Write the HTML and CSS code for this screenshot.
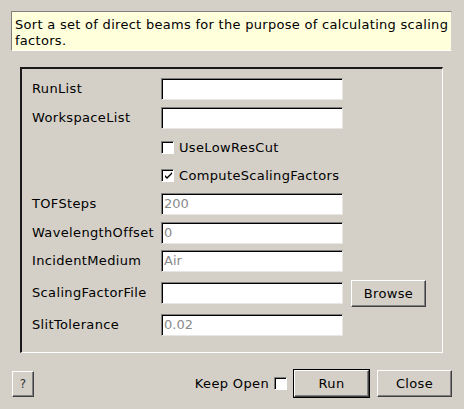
FILE: index.html
```html
<!DOCTYPE html>
<html>
<head>
<meta charset="utf-8">
<link rel="stylesheet" href="styles.css">
</head>
<body>
<div class="dialog">
  <div class="desc">Sort a set of direct beams for the purpose of calculating scaling factors.</div>
  <div class="frame">
    <div class="grid">
      <div class="label">RunList</div>
      <div class="input"></div>
      <div></div>

      <div class="label">WorkspaceList</div>
      <div class="input"></div>
      <div></div>

      <div></div>
      <div class="check"><span class="box"></span><span>UseLowResCut</span></div>
      <div></div>

      <div></div>
      <div class="check"><span class="box"><svg width="9" height="9" viewBox="0 0 9 9"><path d="M1 4 L3 6 L8 1 L8 3 L3 8 L1 6 Z" fill="#000"/></svg></span><span>ComputeScalingFactors</span></div>
      <div></div>

      <div class="label">TOFSteps</div>
      <div class="input muted">200</div>
      <div></div>

      <div class="label">WavelengthOffset</div>
      <div class="input muted">0</div>
      <div></div>

      <div class="label">IncidentMedium</div>
      <div class="input muted">Air</div>
      <div></div>

      <div class="label shifted">ScalingFactorFile</div>
      <div class="input shifted"></div>
      <div class="btn browse">Browse</div>

      <div class="label">SlitTolerance</div>
      <div class="input muted">0.02</div>
      <div></div>
    </div>
  </div>
  <div class="footer">
    <div class="btn help">?</div>
    <div class="spacer"></div>
    <span class="keep">Keep Open</span>
    <span class="box keepbox"></span>
    <div class="default"><div class="btn run">Run</div></div>
    <div class="btn close">Close</div>
  </div>
</div>
</body>
</html>
```

FILE: styles.css
```css
html, body {
  margin: 0;
  padding: 0;
  background: #d4d0c8;
  width: 464px;
  height: 409px;
  overflow: hidden;
}

.dialog {
  font-family: "DejaVu Sans", sans-serif;
  font-size: 13px;
  letter-spacing: 0.35px;
  color: #000;
  padding-top: 11px;
}

.desc {
  margin: 0 12px 0 11px;
  background: #ffffdc;
  border-top: 1px solid #808080;
  border-left: 1px solid #808080;
  border-right: 1px solid #d4d0c8;
  border-bottom: 1px solid #ffffff;
  padding: 5px 0 0 3px;
  line-height: 16px;
  letter-spacing: 0.29px;
  box-sizing: border-box;
  height: 40px;
}

.frame {
  margin: 16px 21px 0 20px;
  height: 286px;
  box-sizing: border-box;
  border-top: 2px solid #1a1a1a;
  border-left: 2px solid #1a1a1a;
  border-right: 1px solid #ffffff;
  border-bottom: 1px solid #ffffff;
  padding: 9px 0 0 10px;
}

.grid {
  display: grid;
  grid-template-columns: 123px 182px 83px;
  grid-template-rows: 29px 29px 28px 29px 29px 28px 30px 34px 22px;
  column-gap: 6px;
  align-items: start;
}

.label {
  white-space: nowrap;
  line-height: 22px;
  height: 22px;
}

.shifted {
  margin-top: 2px;
}

.input {
  height: 22px;
  box-sizing: border-box;
  background: #fff;
  border-top: 1px solid #808080;
  border-left: 1px solid #808080;
  border-right: 1px solid #e8e6e2;
  border-bottom: 1px solid #e8e6e2;
  box-shadow: inset 1px 1px 0 #000;
  padding-left: 2px;
  line-height: 20px;
  letter-spacing: 0;
}

.muted {
  color: #8a8a8a;
}

.check {
  display: flex;
  align-items: center;
  gap: 5px;
  height: 22px;
}

.box {
  display: inline-flex;
  align-items: center;
  justify-content: center;
  width: 13px;
  height: 13px;
  box-sizing: border-box;
  background: #fff;
  border-top: 1px solid #808080;
  border-left: 1px solid #808080;
  border-right: 1px solid #ffffff;
  border-bottom: 1px solid #ffffff;
  box-shadow: inset 1px 1px 0 #000;
  flex: none;
}

.box svg {
  display: block;
  margin: 1px 0 0 1px;
}

.btn {
  box-sizing: border-box;
  background: #d4d0c8;
  border-top: 1px solid #ffffff;
  border-left: 1px solid #ffffff;
  border-right: 1px solid #404040;
  border-bottom: 1px solid #404040;
  box-shadow: inset -1px -1px 0 #808080;
  display: flex;
  align-items: center;
  justify-content: center;
}

.browse {
  width: 75px;
  height: 27px;
  justify-self: start;
  margin-left: 2px;
}

.footer {
  display: flex;
  align-items: center;
  margin: 16px 12px 0 12px;
  height: 29px;
}

.spacer {
  flex: 1;
}

.help {
  width: 22px;
  height: 26px;
  font-size: 12px;
  color: #333;
}

.keep {
  margin-right: 5px;
}

.keepbox {
  margin-right: 6px;
}

.default {
  border: 1px solid #000;
  width: 77px;
  height: 29px;
  box-sizing: border-box;
  margin-right: 7px;
}

.run {
  width: 75px;
  height: 27px;
}

.close {
  width: 75px;
  height: 27px;
}
```
